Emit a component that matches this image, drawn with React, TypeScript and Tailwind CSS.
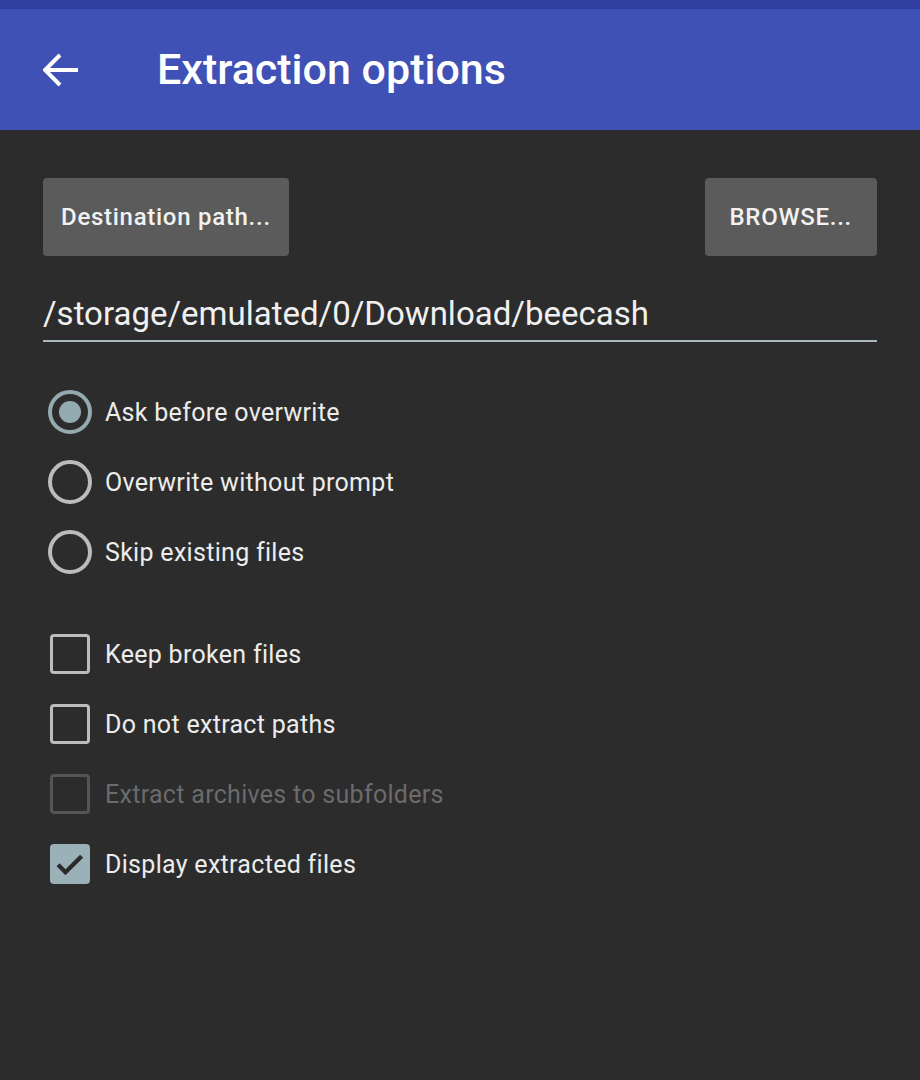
import React from "react";

const font = { fontFamily: "Roboto, 'Noto Sans', sans-serif" };

function Radio({ checked, label }: { checked?: boolean; label: string }) {
  return (
    <div className="flex items-center h-[70px]">
      <div
        className={
          "w-[44px] h-[44px] rounded-full border-[4px] flex items-center justify-center shrink-0 ml-[5px] " +
          (checked ? "border-[#93aab0]" : "border-[#bcbcbc]")
        }
      >
        {checked && <div className="w-[22px] h-[22px] rounded-full bg-[#93aab0]" />}
      </div>
      <span className="ml-[13px] text-[25px] tracking-[0.012em] text-[#ececec] leading-none">
        {label}
      </span>
    </div>
  );
}

function Check({
  checked,
  disabled,
  label,
}: {
  checked?: boolean;
  disabled?: boolean;
  label: string;
}) {
  return (
    <div className="flex items-center h-[70px]">
      <div className="w-[55px] flex justify-center shrink-0 ml-[-1px]">
        {checked ? (
          <div className="w-[40px] h-[40px] rounded-[4px] bg-[#9ab1b8] flex items-center justify-center">
            <svg width="34" height="34" viewBox="0 0 24 24">
              <path d="M3.6 12.6l5.2 5.2L20.2 6.6" fill="none" stroke="#2b2b2b" strokeWidth="3" />
            </svg>
          </div>
        ) : (
          <div
            className={
              "w-[40px] h-[40px] rounded-[4px] border-[3.5px] " +
              (disabled ? "border-[#555555]" : "border-[#bcbcbc]")
            }
          />
        )}
      </div>
      <span
        className={
          "ml-[8px] text-[25px] tracking-[0.012em] leading-none " +
          (disabled ? "text-[#6b6b6b]" : "text-[#ececec]")
        }
      >
        {label}
      </span>
    </div>
  );
}

export default function App() {
  return (
    <div className="w-[920px] h-[1080px] bg-[#2c2c2c] flex flex-col" style={font}>
      <div className="h-[9px] bg-[#303f9f]" />
      <div className="h-[121px] bg-[#3f51b5] flex items-center">
        <svg className="ml-[43px]" width="36" height="34" viewBox="0 0 36 34">
          <path d="M2 17H35M17 2L2 17l15 15" fill="none" stroke="#ffffff" strokeWidth="4" />
        </svg>
        <span className="ml-[78px] text-[43px] font-medium text-white leading-none">
          Extraction options
        </span>
      </div>
      <div className="px-[43px] pt-[48px] flex flex-col">
        <div className="flex justify-between">
          <div className="h-[78px] px-[18px] rounded-[4px] bg-[#5b5b5b] flex items-center text-[24px] tracking-[0.03em] font-medium text-[#f2f2f2]">
            Destination path...
          </div>
          <div className="h-[78px] px-[25px] rounded-[4px] bg-[#5b5b5b] flex items-center text-[24px] tracking-[0.03em] font-medium text-[#f2f2f2]">
            BROWSE...
          </div>
        </div>
        <div className="mt-[41px] text-[33px] leading-none text-[#f0f0f0]">
          /storage/emulated/0/Download/beecash
        </div>
        <div className="mt-[10px] h-[2px] bg-[#a9b9bd]" />
        <div className="mt-[35px] flex flex-col">
          <Radio checked label="Ask before overwrite" />
          <Radio label="Overwrite without prompt" />
          <Radio label="Skip existing files" />
        </div>
        <div className="mt-[32px] flex flex-col">
          <Check label="Keep broken files" />
          <Check label="Do not extract paths" />
          <Check disabled label="Extract archives to subfolders" />
          <Check checked label="Display extracted files" />
        </div>
      </div>
    </div>
  );
}
